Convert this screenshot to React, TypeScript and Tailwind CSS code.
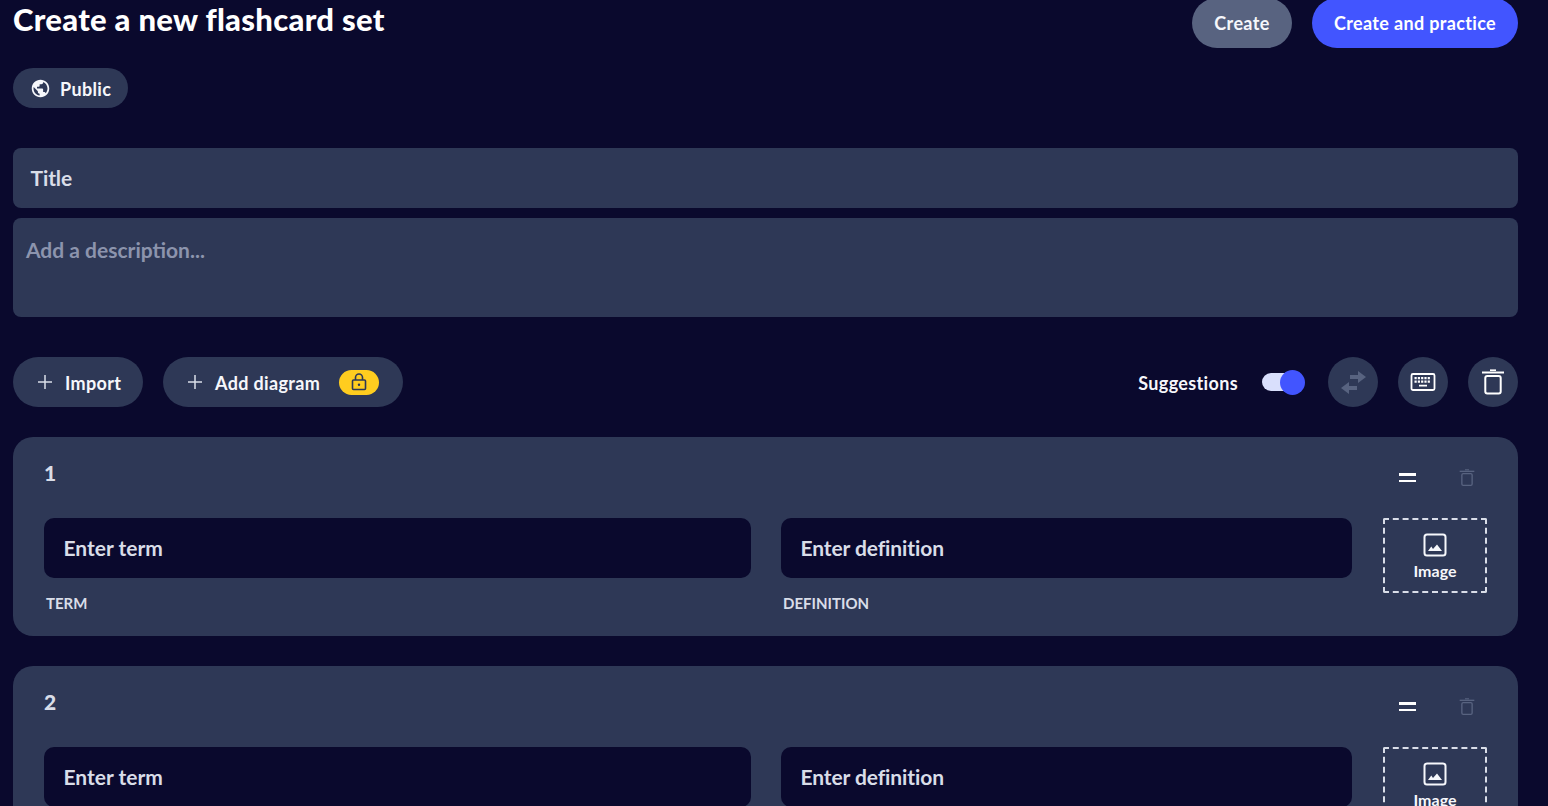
import { MdPublic } from "react-icons/md";

const font = "font-['Lato','Liberation_Sans',sans-serif]";

function Plus() {
  return (
    <svg width="16" height="16" viewBox="0 0 16 16" className="text-[#d9dde8]">
      <path d="M8 1v14M1 8h14" stroke="currentColor" strokeWidth="1.5" />
    </svg>
  );
}

function Trash({ width }: { width: number }) {
  return (
    <svg width={width} height={(width * 26) / 24} viewBox="0 0 24 26" fill="none" stroke="currentColor" strokeWidth="2">
      <path d="M1 3.500h22" />
      <path d="M9 1.200h6" strokeWidth="1.600" />
      <rect x="4.300" y="7" width="15.400" height="17.500" rx="2" />
    </svg>
  );
}

function ImageIcon() {
  return (
    <svg width="24" height="24" viewBox="0 0 24 24" fill="none">
      <rect x="1.500" y="1.500" width="21" height="21" rx="2.500" stroke="currentColor" strokeWidth="2" />
      <path d="M5 18l3.300-4.500L10 16l4-4.500 5 6.500z" fill="currentColor" />
    </svg>
  );
}

function Keyboard() {
  return (
    <svg width="26" height="20" viewBox="0 0 26 20" fill="none">
      <rect x="1.500" y="2" width="23" height="16" rx="1.500" stroke="currentColor" strokeWidth="1.800" />
      <path
        d="M4.500 5h2.200v2.200H4.500zM7.800 5H10v2.200H7.800zM11.100 5h2.200v2.200h-2.200zM14.400 5h2.200v2.200h-2.200zM17.700 5h2.200v2.200h-2.200zM4.500 8.600h2.200v2.200H4.500zM7.800 8.600H10v2.200H7.800zM11.100 8.600h2.200v2.200h-2.200zM14.400 8.600h2.200v2.200h-2.200zM17.700 8.600h2.200v2.200h-2.200zM9 12.700h8v1.800H9z"
        fill="currentColor"
      />
    </svg>
  );
}

function Swap() {
  return (
    <svg width="26" height="24" viewBox="0 0 26 24" className="text-[#586380]" fill="currentColor">
      <path d="M10 5h8V1l8 6-8 6V9h-8zM17 16H9v-4l-8 6 8 6v-4h8z" />
    </svg>
  );
}

function Lock() {
  return (
    <svg width="16" height="18" viewBox="0 0 16 18" fill="none" stroke="#2e3856" strokeWidth="1.600">
      <rect x="1.500" y="7" width="13" height="9.500" rx="1" />
      <path d="M4.500 7V4.500a3.500 3.500 0 0 1 7 0V7" />
      <circle cx="8" cy="11.800" r="1.200" fill="#2e3856" stroke="none" />
    </svg>
  );
}

function Pill({ children, className }: { children: React.ReactNode; className: string }) {
  return (
    <div className={`flex h-[50px] items-center rounded-full bg-[#2e3856] text-[18px] font-bold tracking-[0.35px] text-[#f6f7fb] ${className}`}>
      {children}
    </div>
  );
}

function Circle({ children }: { children: React.ReactNode }) {
  return (
    <div className="flex h-[50px] w-[50px] items-center justify-center rounded-full bg-[#2e3856] text-white">
      {children}
    </div>
  );
}

function Card({ n, labels }: { n: number; labels: boolean }) {
  return (
    <div className="h-[199px] shrink-0 rounded-[20px] bg-[#2e3856] pr-[31px] pl-[31px]">
      <div className="flex h-[81px] items-start justify-between">
        <div className="mt-[24px] text-[21px] leading-[24px] font-black text-[#d9dde8]">{n}</div>
        <div className="mt-[32px] mr-[12px] flex items-center gap-[43px]">
          <div className="flex h-[9px] w-[17px] flex-col justify-between">
            <div className="h-[2.500px] bg-white" />
            <div className="h-[2.500px] bg-white" />
          </div>
          <div className="text-[#586380]">
            <Trash width={16} />
          </div>
        </div>
      </div>
      <div className="flex items-start">
        <div className="w-[707px]">
          <div className="flex h-[60px] items-center rounded-[10px] bg-[#0a092d] px-[19.500px] text-[21px] font-bold text-[#d9dde8]">
            Enter term
          </div>
          {labels && <div className="mt-[16px] pl-[2px] text-[15px] leading-[18px] font-bold text-[#d9dde8]">TERM</div>}
        </div>
        <div className="ml-[30px] w-[571px]">
          <div className="flex h-[60px] items-center rounded-[10px] bg-[#0a092d] px-[19.500px] text-[21px] font-bold tracking-[-0.1px] text-[#d9dde8]">
            Enter definition
          </div>
          {labels && <div className="mt-[16px] pl-[2px] text-[15px] leading-[18px] font-bold text-[#d9dde8]">DEFINITION</div>}
        </div>
        <div className="ml-[31px] flex h-[75px] w-[104px] flex-col items-center justify-center rounded-[2px] border-2 border-dashed border-[#d9dde8] pt-[2px] text-[#f6f7fb]">
          <ImageIcon />
          <div className="mt-[5px] text-[16px] leading-[18px] font-bold">Image</div>
        </div>
      </div>
    </div>
  );
}

export default function App() {
  return (
    <div className={`${font} h-[806px] overflow-hidden bg-[#0a092d] pr-[30px] pl-[13px]`}>
      {/* Header */}
      <div className="-mt-[2px] flex h-[50px] items-start justify-between">
        <h1 className="-mt-[2px] text-[31px] leading-[46px] font-black tracking-[0.3px] text-white">Create a new flashcard set</h1>
        <div className="flex gap-[20px]">
          <div className="flex h-[50px] w-[100px] items-center justify-center rounded-full bg-[#586380] text-[18px] font-bold tracking-[0.35px] text-[#f6f7fb]">
            Create
          </div>
          <div className="flex h-[50px] w-[206px] items-center justify-center rounded-full bg-[#4255ff] text-[18px] font-bold tracking-[0.35px] text-white">
            Create and practice
          </div>
        </div>
      </div>

      <div className="mt-[20px] flex h-[40px] w-[115px] items-center gap-[9px] rounded-full bg-[#2e3856] pl-[17px] text-[18px] font-bold tracking-[0.35px] text-[#f6f7fb]">
        <MdPublic size={21} />
        <span className="pt-[2px]">Public</span>
      </div>

      {/* Title and description */}
      <div className="mt-[40px] flex h-[60px] items-center rounded-[8px] bg-[#2e3856] pl-[17.500px] text-[21px] font-bold tracking-[-0.1px] text-[#d9dde8]">
        Title
      </div>
      <div className="mt-[10px] h-[99px] rounded-[8px] bg-[#2e3856] pt-[18px] pl-[13px] text-[21px] leading-[28px] font-bold text-[#8c94ad]">
        Add a description...
      </div>

      {/* Toolbar */}
      <div className="mt-[40px] flex items-center justify-between">
        <div className="flex gap-[20px]">
          <Pill className="w-[130px] gap-[12px] pl-[24px]">
            <Plus />
            <span className="pt-[2px]">Import</span>
          </Pill>
          <Pill className="w-[240px] gap-[12px] pl-[24px]">
            <Plus />
            <span className="pt-[2px]">Add diagram</span>
            <div className="ml-[7px] flex h-[25px] w-[40px] items-center justify-center rounded-full bg-[#ffcd1f]">
              <Lock />
            </div>
          </Pill>
        </div>
        <div className="flex items-center">
          <span className="pt-[2px] text-[18px] font-bold tracking-[0.35px] text-[#f6f7fb]">Suggestions</span>
          <div className="relative mr-[25px] ml-[24px] h-[18px] w-[41px] rounded-full bg-[#d9dffc]">
            <div className="absolute -top-[3.500px] -right-[1.500px] h-[25px] w-[25px] rounded-full bg-[#4255ff]" />
          </div>
          <div className="flex gap-[20px]">
            <Circle>
              <Swap />
            </Circle>
            <Circle>
              <Keyboard />
            </Circle>
            <Circle>
              <Trash width={24} />
            </Circle>
          </div>
        </div>
      </div>

      {/* Cards */}
      <div className="mt-[30px] flex flex-col gap-[30px]">
        <Card n={1} labels />
        <Card n={2} labels={false} />
      </div>
    </div>
  );
}
